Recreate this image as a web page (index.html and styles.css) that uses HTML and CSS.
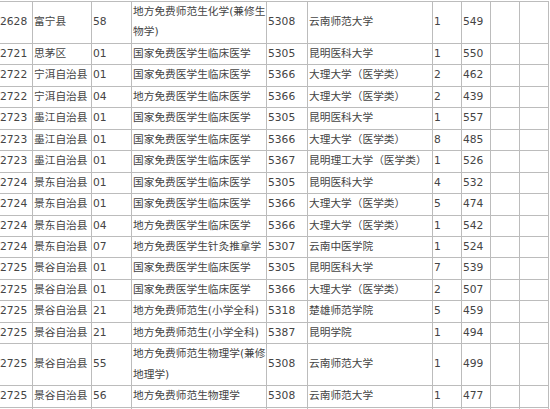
FILE: index.html
```html
<!DOCTYPE html>
<html lang="zh-CN">
<head>
<meta charset="utf-8">
<title>招生计划</title>
<link rel="stylesheet" href="styles.css">
</head>
<body>
<table class="plan">
  <colgroup>
    <col class="c-code"><col class="c-area"><col class="c-no"><col class="c-major"><col class="c-sch">
    <col class="c-school"><col class="c-num"><col class="c-score"><col class="c-e1"><col class="c-e2">
  </colgroup>
  <tbody>
    <tr><td>2628</td><td>富宁县</td><td>58</td><td>地方免费师范生化学(兼修生物学)</td><td>5308</td><td>云南师范大学</td><td>1</td><td>549</td><td></td><td></td></tr>
    <tr><td>2721</td><td>思茅区</td><td>01</td><td>国家免费医学生临床医学</td><td>5305</td><td>昆明医科大学</td><td>1</td><td>550</td><td></td><td></td></tr>
    <tr><td>2722</td><td>宁洱自治县</td><td>01</td><td>国家免费医学生临床医学</td><td>5366</td><td>大理大学（医学类）</td><td>2</td><td>462</td><td></td><td></td></tr>
    <tr><td>2722</td><td>宁洱自治县</td><td>04</td><td>地方免费医学生临床医学</td><td>5366</td><td>大理大学（医学类）</td><td>2</td><td>439</td><td></td><td></td></tr>
    <tr><td>2723</td><td>墨江自治县</td><td>01</td><td>国家免费医学生临床医学</td><td>5305</td><td>昆明医科大学</td><td>1</td><td>557</td><td></td><td></td></tr>
    <tr><td>2723</td><td>墨江自治县</td><td>01</td><td>国家免费医学生临床医学</td><td>5366</td><td>大理大学（医学类）</td><td>8</td><td>485</td><td></td><td></td></tr>
    <tr><td>2723</td><td>墨江自治县</td><td>01</td><td>国家免费医学生临床医学</td><td>5367</td><td>昆明理工大学（医学类）</td><td>1</td><td>526</td><td></td><td></td></tr>
    <tr><td>2724</td><td>景东自治县</td><td>01</td><td>国家免费医学生临床医学</td><td>5305</td><td>昆明医科大学</td><td>4</td><td>532</td><td></td><td></td></tr>
    <tr><td>2724</td><td>景东自治县</td><td>01</td><td>国家免费医学生临床医学</td><td>5366</td><td>大理大学（医学类）</td><td>5</td><td>474</td><td></td><td></td></tr>
    <tr><td>2724</td><td>景东自治县</td><td>04</td><td>地方免费医学生临床医学</td><td>5366</td><td>大理大学（医学类）</td><td>1</td><td>542</td><td></td><td></td></tr>
    <tr><td>2724</td><td>景东自治县</td><td>07</td><td>地方免费医学生针灸推拿学</td><td>5307</td><td>云南中医学院</td><td>1</td><td>524</td><td></td><td></td></tr>
    <tr><td>2725</td><td>景谷自治县</td><td>01</td><td>国家免费医学生临床医学</td><td>5305</td><td>昆明医科大学</td><td>7</td><td>539</td><td></td><td></td></tr>
    <tr><td>2725</td><td>景谷自治县</td><td>01</td><td>国家免费医学生临床医学</td><td>5366</td><td>大理大学（医学类）</td><td>2</td><td>507</td><td></td><td></td></tr>
    <tr><td>2725</td><td>景谷自治县</td><td>21</td><td>地方免费师范生(小学全科)</td><td>5318</td><td>楚雄师范学院</td><td>5</td><td>459</td><td></td><td></td></tr>
    <tr><td>2725</td><td>景谷自治县</td><td>21</td><td>地方免费师范生(小学全科)</td><td>5387</td><td>昆明学院</td><td>1</td><td>494</td><td></td><td></td></tr>
    <tr><td>2725</td><td>景谷自治县</td><td>55</td><td>地方免费师范生物理学(兼修地理学)</td><td>5308</td><td>云南师范大学</td><td>1</td><td>499</td><td></td><td></td></tr>
    <tr><td>2725</td><td>景谷自治县</td><td>56</td><td>地方免费师范生物理学</td><td>5308</td><td>云南师范大学</td><td>1</td><td>477</td><td></td><td></td></tr>
    <tr class="next"><td></td><td></td><td></td><td></td><td></td><td></td><td></td><td></td><td></td><td></td></tr>
  </tbody>
</table>
</body>
</html>
```

FILE: styles.css
```css
html, body {
  margin: 0;
  padding: 0;
  background: #ffffff;
  overflow: hidden;
}

body {
  width: 550px;
  height: 409px;
}

.plan {
  border-collapse: collapse;
  table-layout: fixed;
  width: 550px;
  margin: 1px 0 0 -2px;
  font-family: "DejaVu Sans", "Noto Sans CJK SC", sans-serif;
  font-size: 10.7px;
  line-height: 20.45px;
  color: #444444;
}

.plan td {
  border: 1px solid #bcbcbc;
  box-shadow: 1px 1px 0 0 #dedede;
  padding: 0 0 0 1px;
  vertical-align: middle;
  text-align: left;
  white-space: normal;
  overflow: hidden;
}

.plan .next td {
  height: 20px;
}

.c-code { width: 34px; }
.c-area { width: 59px; }
.c-no { width: 40px; }
.c-major { width: 135px; }
.c-sch { width: 41px; }
.c-school { width: 125px; }
.c-num { width: 29px; }
.c-score { width: 29px; }
.c-e1 { width: 29px; }
.c-e2 { width: 29px; }
```
